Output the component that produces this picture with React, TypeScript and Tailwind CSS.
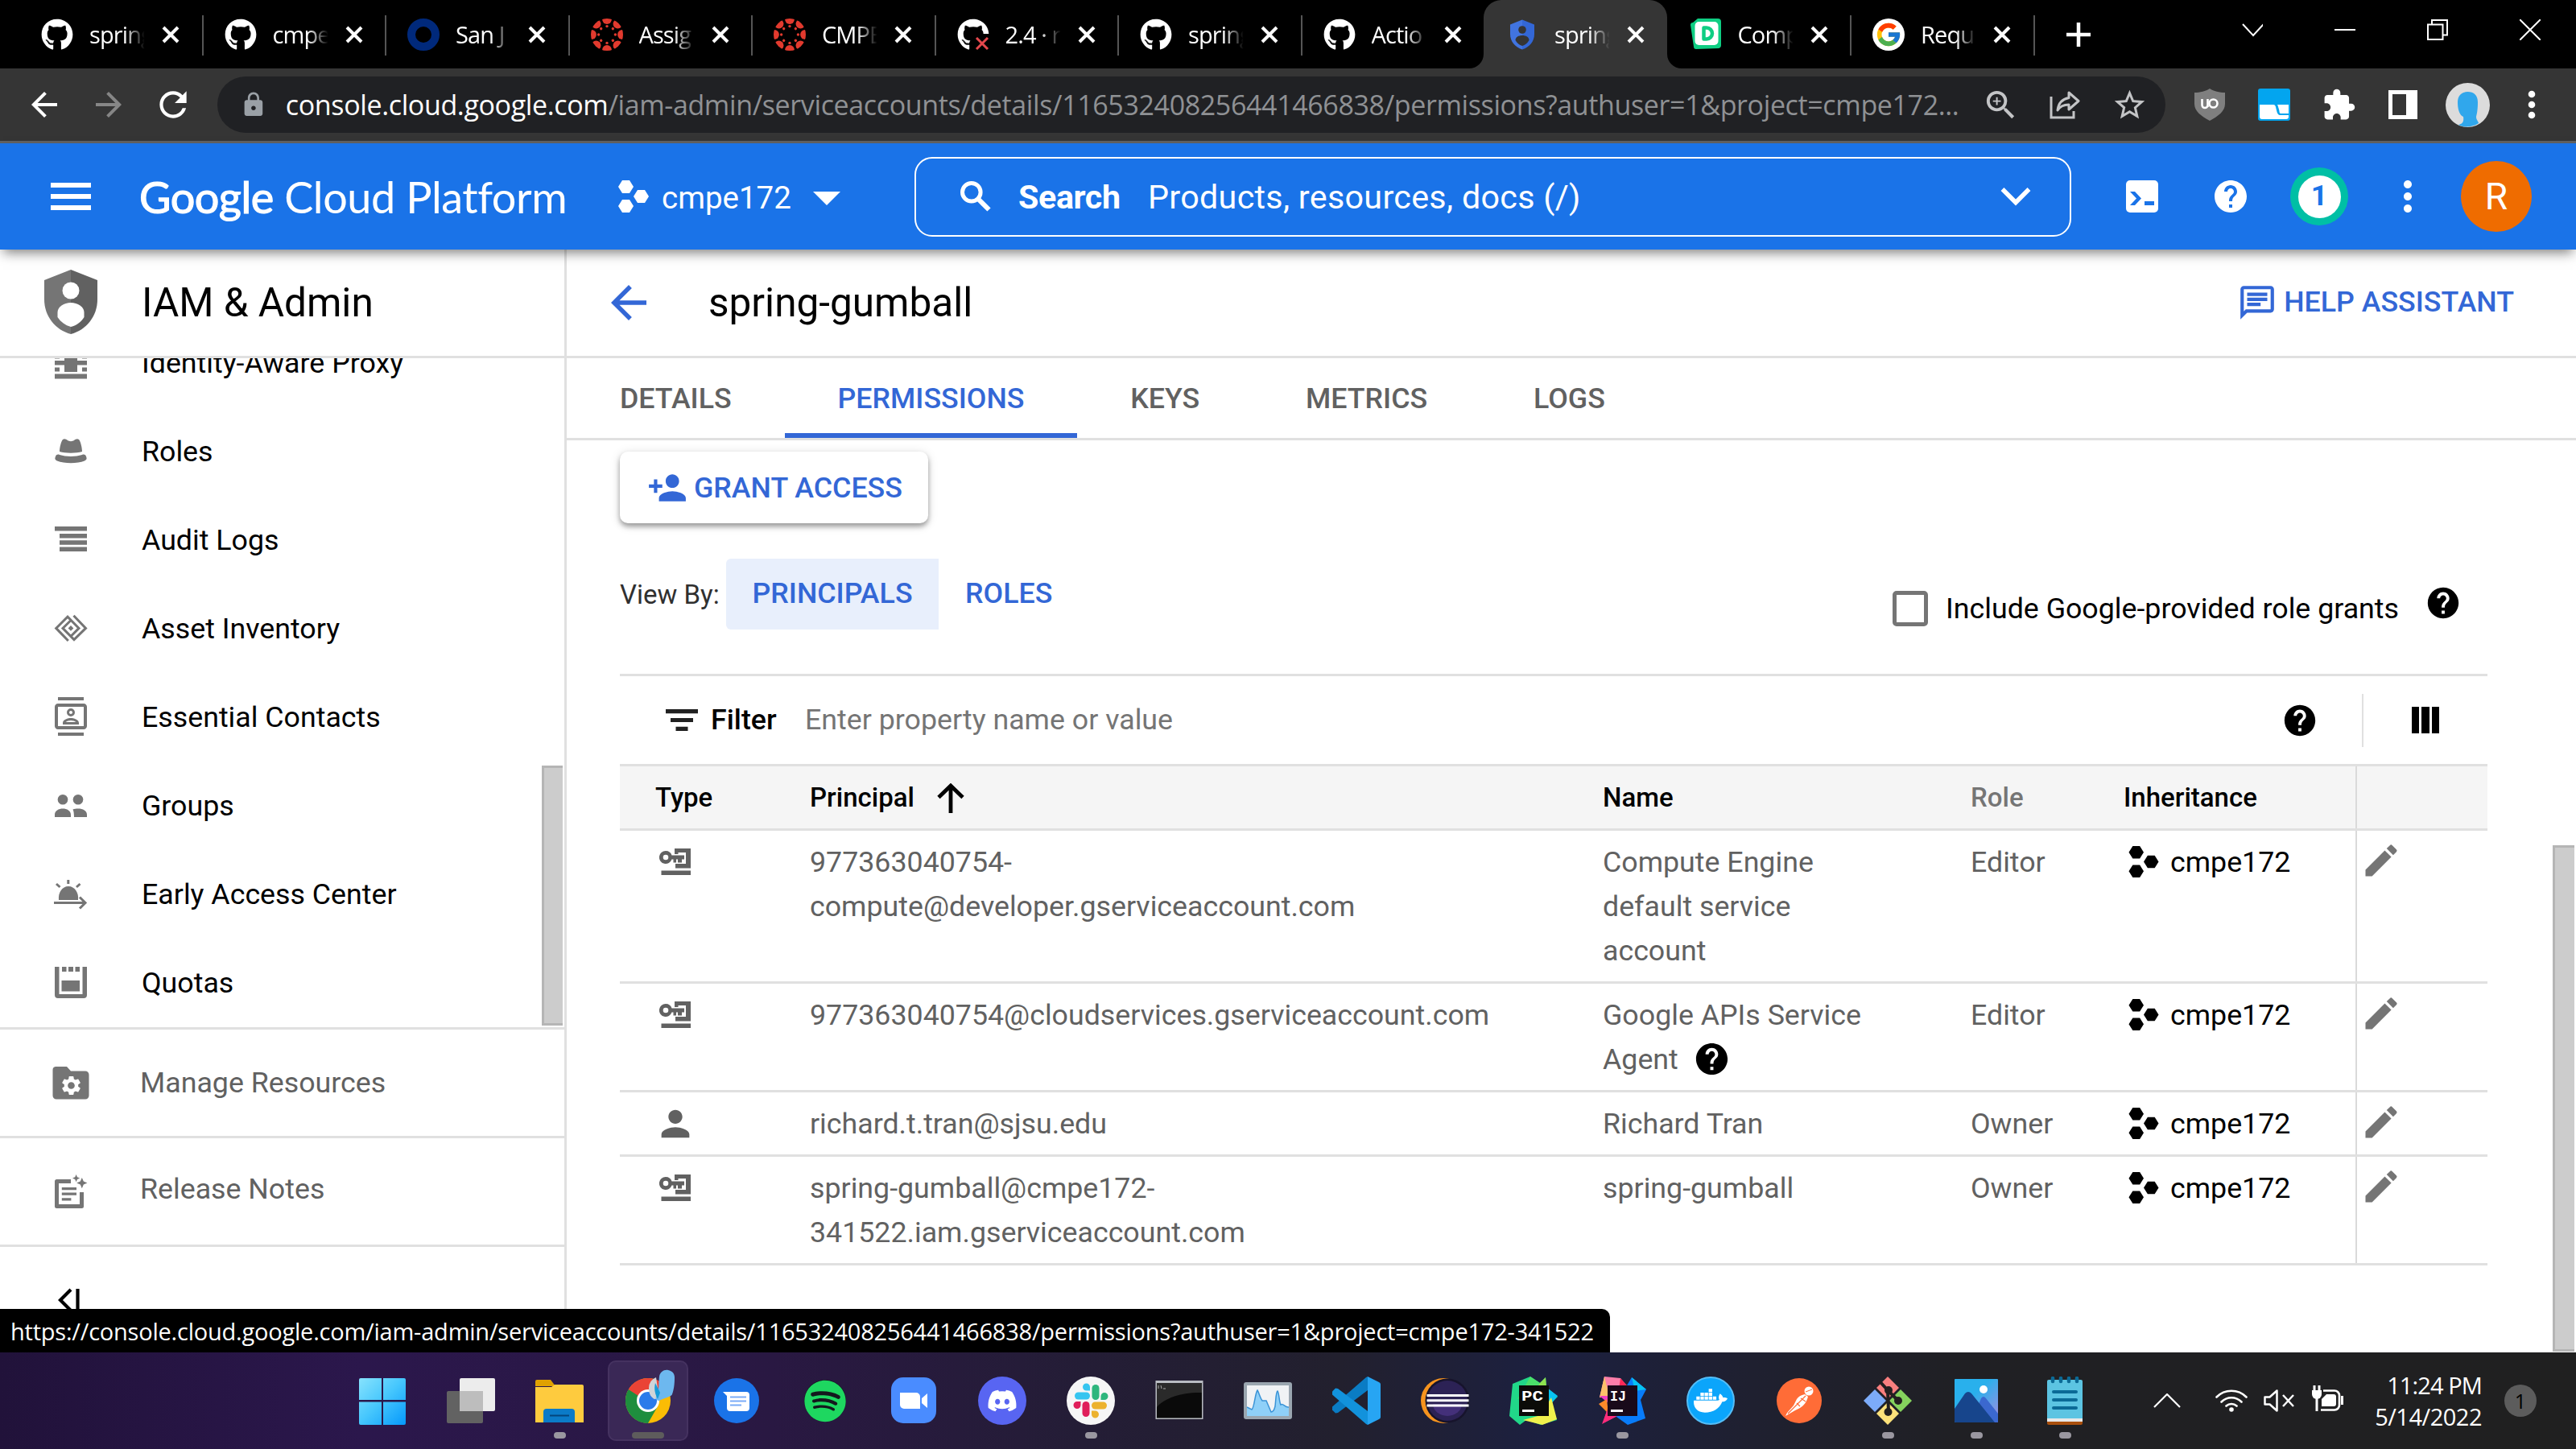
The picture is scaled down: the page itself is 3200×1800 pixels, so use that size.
import React from "react";
import {
  MdArrowBack, MdArrowForward, MdRefresh, MdLock, MdZoomIn, MdStarBorder, MdExtension, MdMoreVert,
  MdHelp, MdEdit, MdPerson, MdPersonAdd, MdOutlineChat, MdOutlineContacts, MdSettings,
} from "react-icons/md";
import { FaGithub, FaSpotify, FaDiscord, FaDocker } from "react-icons/fa";
import { FcGoogle } from "react-icons/fc";

type Kids = { children: React.ReactNode };

/* ---------- favicons ---------- */

const Github = () => <FaGithub className="size-10 text-white" />;

const GithubFail = () => (
  <div className="relative size-10">
    <FaGithub className="size-10 text-white" />
    <svg viewBox="0 0 40 40" className="absolute inset-0 size-10">
      <rect x="20" y="19" width="20" height="21" fill="#000" />
      <path d="M24 24l14 14M38 24L24 38" stroke="#e5484d" strokeWidth="3" />
    </svg>
  </div>
);

const Ring = () => (
  <svg viewBox="0 0 40 40" className="size-10">
    <circle cx="20" cy="20" r="15" fill="none" stroke="#00297b" strokeWidth="10" />
  </svg>
);

const Canvas = () => (
  <svg viewBox="0 0 40 40" className="size-10" fill="#e23a2e">
    <defs>
      <clipPath id="cv"><circle cx="20" cy="20" r="20" /></clipPath>
    </defs>
    {[0, 45, 90, 135, 180, 225, 270, 315].map((a) => (
      <g key={a} transform={`rotate(${a} 20 20)`} clipPath="url(#cv)">
        <circle cx="20" cy="1" r="5.9" />
        <circle cx="20" cy="9.6" r="1.7" />
      </g>
    ))}
  </svg>
);

const BlueShield = () => (
  <svg viewBox="0 0 40 40" className="size-10">
    <path d="M20 1.500l15 6v12c0 9-6 16-15 19z" fill="#3367d6" />
    <path d="M20 1.500l-15 6v12c0 9 6 16 15 19z" fill="#4174e0" />
    <circle cx="20" cy="14" r="4.800" fill="#353535" />
    <path d="M11.500 27c0-4 4-6 8.500-6s8.500 2 8.500 6c-2 3.500-5 6-8.500 7-3.500-1-6.500-3.500-8.500-7z" fill="#353535" />
  </svg>
);

const GreenD = () => (
  <svg viewBox="0 0 40 40" className="size-10">
    <path d="M1 8a3 3 0 013-3L10 0h25a4 4 0 014 4v29a4 4 0 01-3 4L8 38a3 3 0 01-3-3z" fill="#0fce83" />
    <rect x="6.500" y="4" width="29" height="29" rx="5" fill="#fff" />
    <path d="M17.500 11.500h3.500a7 7 0 010 14h-3.500z" fill="none" stroke="#0fce83" strokeWidth="4.500" strokeLinejoin="round" />
  </svg>
);

const GoogleG = () => (
  <div className="flex size-10 items-center justify-center rounded-full bg-white">
    <FcGoogle className="size-[34px]" />
  </div>
);

const tabs: { title: string; Icon: React.FC; active?: boolean; line?: boolean }[] = [
  { title: "spring", Icon: Github, line: true },
  { title: "cmpe", Icon: Github, line: true },
  { title: "San J", Icon: Ring, line: true },
  { title: "Assig", Icon: Canvas, line: true },
  { title: "CMPE", Icon: Canvas, line: true },
  { title: "2.4 · r", Icon: GithubFail, line: true },
  { title: "spring", Icon: Github, line: true },
  { title: "Actio", Icon: Github },
  { title: "spring", Icon: BlueShield, active: true },
  { title: "Comp", Icon: GreenD, line: true },
  { title: "Requ", Icon: GoogleG, line: true },
];

function Tab({ title, Icon, active, line }: (typeof tabs)[number]) {
  return (
    <div className={"relative flex h-[85px] w-[227.5px] shrink-0 items-center pl-[28px] " + (active ? "rounded-t-[22px] bg-[#353535]" : "")}>
      {active && (
        <>
          <svg viewBox="0 0 18 18" className="absolute -left-[18px] bottom-0 size-[18px]"><path d="M18 0v18H0A18 18 0 0018 0z" fill="#353535" /></svg>
          <svg viewBox="0 0 18 18" className="absolute -right-[18px] bottom-0 size-[18px]"><path d="M0 0v18h18A18 18 0 010 0z" fill="#353535" /></svg>
        </>
      )}
      <div className="size-10"><Icon /></div>
      <div className="ml-5 w-[70px] whitespace-nowrap text-[29px] tracking-[-0.9px] text-white [mask-image:linear-gradient(90deg,#000_62%,transparent_98%)]">{title}</div>
      <svg viewBox="0 0 22 22" className="ml-[20px] size-[22px]"><path d="M2 2l18 18M20 2L2 20" stroke="#fff" strokeWidth="4" /></svg>
      {line && <div className="absolute right-[-2px] top-[19px] h-[50px] w-[2px] bg-[#555]" />}
    </div>
  );
}

const WinBtn = ({ children }: Kids) => (
  <div className="flex h-[73px] w-[115px] items-center justify-center">
    <svg viewBox="0 0 26 26" className="size-[26px]" fill="none" stroke="#fff" strokeWidth="2">{children}</svg>
  </div>
);

function TabStrip() {
  return (
    <div className="flex h-[85px] shrink-0 bg-black pl-[23px]">
      {tabs.map((t, i) => <Tab key={i} {...t} />)}
      <div className="flex h-[85px] w-[113px] items-center justify-center">
        <svg viewBox="0 0 30 30" className="size-[30px]"><path d="M15 0v30M0 15h30" stroke="#fff" strokeWidth="4.500" /></svg>
      </div>
      <div className="ml-auto flex">
        <WinBtn><path d="M1 6l13 14L27 6" /></WinBtn>
        <WinBtn><path d="M0 13h26" /></WinBtn>
        <WinBtn><path d="M1 6.500h18.500V25H1zM6 6V1h19v18.500h-5" /></WinBtn>
        <WinBtn><path d="M0 0l26 26M26 0L0 26" /></WinBtn>
      </div>
    </div>
  );
}

const Slot = ({ children }: Kids) => <div className="flex w-20 shrink-0 items-center justify-center">{children}</div>;

function Toolbar() {
  return (
    <div className="flex h-[93px] shrink-0 items-center border-b-[3px] border-[#616161] bg-[#353535] pl-[15px]">
      <Slot><MdArrowBack className="size-12 text-white" /></Slot>
      <Slot><MdArrowForward className="size-12 text-[#868686]" /></Slot>
      <Slot><MdRefresh className="size-[50px] text-white" /></Slot>
      <div className="ml-[15px] flex h-[70px] w-[2420px] items-center rounded-full bg-[#202124] pl-[28px] pr-[5px]">
        <MdLock className="size-[34px] text-[#9aa0a6]" />
        <div className="ml-[23px] w-[2100px] whitespace-nowrap text-[34px] leading-[70px] tracking-[-0.37px] text-[#8f9194]">
          <span className="text-white">console.cloud.google.com</span>/iam-admin/serviceaccounts/details/116532408256441466838/permissions?authuser=1&amp;project=cmpe172...
        </div>
        <Slot><MdZoomIn className="size-[47px] text-[#c3c4c6]" /></Slot>
        <Slot>
          <svg viewBox="0 0 38 36" className="h-[36px] w-[38px]" fill="none" stroke="#c3c4c6" strokeWidth="3">
            <path d="M2 8v26h28v-8" />
            <path d="M24 3l12 10.500L24 24v-6c-7 0-11 2-14 7 1-9 6-14 14-15.500z" strokeLinejoin="round" />
          </svg>
        </Slot>
        <Slot><MdStarBorder className="size-[45px] text-[#c3c4c6]" /></Slot>
      </div>
      <div className="ml-[15px] flex">
        <Slot>
          <svg viewBox="0 0 38 40" className="h-10 w-[38px]">
            <path d="M19 0c5 3.500 12 5 19 5v14c0 9-8 15-19 21C8 34 0 28 0 19V5c7 0 14-1.500 19-5z" fill="#7f7f7f" />
            <path d="M9.500 13v7.500a3.500 3.500 0 007 0V13m0 10v-4" fill="none" stroke="#fff" strokeWidth="2.600" />
            <circle cx="23.500" cy="18.500" r="5" fill="none" stroke="#fff" strokeWidth="2.600" />
          </svg>
        </Slot>
        <Slot>
          <svg viewBox="0 0 40 40" className="size-10">
            <rect width="40" height="40" rx="3" fill="#03a5ef" />
            <path d="M2 20h17c3 0 3 3 4 7s2 6 5 6h10v2c0 2-1 3-3 3H5c-2 0-3-1-3-3zM24 20h14v11h-9c-3 0-2-2-3-5s-1-4-2-6z" fill="#fff" />
          </svg>
        </Slot>
        <Slot><MdExtension className="size-[43px] text-white" /></Slot>
        <Slot>
          <svg viewBox="0 0 36 36" className="size-9"><path d="M0 0h36v36H0zM5 5v26h17V5z" fill="#fff" fillRule="evenodd" /></svg>
        </Slot>
        <Slot>
          <svg viewBox="0 0 55 55" className="size-[55px]">
            <circle cx="27.500" cy="27.500" r="27.500" fill="#dcdcdc" />
            <path d="M15 24c0-8 5-13 12.500-13S40 15 40 24c0 9-1 14-2 18 0 4 3 6 3 8-7 5-19 6-25 2 5-1 7-4 6-10-5-2-7-10-7-18z" fill="#30a7ec" />
          </svg>
        </Slot>
        <Slot>
          <svg viewBox="0 0 10 36" className="h-9 w-[10px]" fill="#fff"><circle cx="5" cy="5" r="4.300" /><circle cx="5" cy="18" r="4.300" /><circle cx="5" cy="31" r="4.300" /></svg>
        </Slot>
      </div>
    </div>
  );
}

const Hexes = ({ className }: { className: string }) => (
  <svg viewBox="0 0 38 40" className={className} fill="currentColor">
    <path d="M5 0h9l5 8-5 8H5L0 8zM24 12h9l5 8-5 8h-9l-5-8zM5 24h9l5 8-5 8H5l-5-8z" />
  </svg>
);

const HeadSlot = ({ children }: Kids) => <div className="flex w-[110px] shrink-0 items-center justify-center">{children}</div>;

function CloudHeader() {
  return (
    <div className="relative z-10 flex h-[132px] shrink-0 items-center bg-[#1a73e8] pl-[63px] text-white shadow-[0_8px_14px_-4px_rgba(0,0,0,0.5)]">
      <svg viewBox="0 0 50 34" className="h-[34px] w-[50px]"><path d="M0 3h50M0 17h50M0 31h50" stroke="#fff" strokeWidth="6" /></svg>
      <div className="ml-[60px] w-[595px] whitespace-nowrap pt-[1px] font-[Lato] text-[54px] leading-[66px] tracking-[-0.45px]">
        <span className="[-webkit-text-stroke:1.2px_#fff]">Google</span> Cloud Platform
      </div>
      <Hexes className="h-10 w-[38px]" />
      <div className="ml-[16px] w-[188px] pt-[3px] text-[38.5px]">cmpe172</div>
      <svg viewBox="0 0 34 17" className="mt-[5px] h-[17px] w-[34px]"><path d="M0 0h34L17 17z" fill="#fff" /></svg>
      <div className="ml-[92px] flex h-[99px] w-[1437px] items-center rounded-[22px] border-2 border-white pl-[55px] pr-[48px]">
        <svg viewBox="0 0 38 38" className="size-[38px]" fill="none" stroke="#fff"><circle cx="13.800" cy="13.800" r="11.300" strokeWidth="5" /><path d="M22 22l13.500 13.500" strokeWidth="6" /></svg>
        <div className="ml-[34px] w-[161px] pt-[3px] text-[41.25px] font-bold tracking-[-0.4px]">Search</div>
        <div className="flex-1 pt-[3px] text-[41.25px] tracking-[0.3px]">Products, resources, docs (/)</div>
        <svg viewBox="0 0 38 24" className="h-6 w-[38px]"><path d="M2.500 3L19 19.500 35.500 3" fill="none" stroke="#fff" strokeWidth="5.500" /></svg>
      </div>
      <div className="ml-[33px] flex items-center">
        <HeadSlot>
          <svg viewBox="0 0 40 40" className="size-10">
            <rect width="40" height="40" rx="5" fill="#fff" />
            <path d="M5 14h6l8 8.500-8 8.500H5l8-8.500z" fill="#1a73e8" />
            <path d="M23 26h12v5H23z" fill="#1a73e8" />
          </svg>
        </HeadSlot>
        <HeadSlot><MdHelp className="size-12" /></HeadSlot>
        <HeadSlot>
          <div className="flex size-[72px] items-center justify-center rounded-full bg-[#00bfa5]">
            <div className="flex size-[53px] items-center justify-center rounded-full bg-white text-[35.75px] font-bold leading-none text-[#1a73e8]">1</div>
          </div>
        </HeadSlot>
        <HeadSlot><MdMoreVert className="size-[60px]" /></HeadSlot>
        <HeadSlot>
          <div className="flex size-[88px] items-center justify-center rounded-full bg-[#ef6c00] text-[46px]">R</div>
        </HeadSlot>
      </div>
    </div>
  );
}

/* ---------- sidebar ---------- */

const Glyph = ({ children }: Kids) => <svg viewBox="0 0 48 48" className="size-12" fill="#757575">{children}</svg>;

const navItems: { label: string; icon: React.ReactNode }[] = [
  { label: "Identity-Aware Proxy", icon: <Glyph><path d="M4 38.500h40v6H4zM4 30.500h6v5H4zM38 30.500h6v5h-6zM16 12h16v24H16zM4 22h40v5.500H4zM4 14h6v5.500H4zM38 14h6v5.500h-6z" /></Glyph> },
  { label: "Roles", icon: <Glyph><path d="M14 10c2-1.500 4-.5 6 1s6 1.500 8 0 4-2.500 6-1c2 2 4 10 4 15-7 2.200-21 2.200-28 0 0-5 2-13 4-15z" /><path d="M5 31c1-2.500 3-3 5-2 8 2.500 20 2.500 28 0 2-1 4-.5 5 2 1 2.500 1 4-2 5.500-9 3.500-25 3.500-34 0-3-1.500-3-3-2-5.500z" /></Glyph> },
  { label: "Audit Logs", icon: <Glyph><path d="M4 8h40v5.500H4zM10 17h34v5.500H10zM10 25.300h34v5.500H10zM10 33.500h34V39H10z" /></Glyph> },
  { label: "Asset Inventory", icon: <Glyph><g fill="none" stroke="#757575" strokeWidth="3"><path d="M20.800 40L5.700 24.400 20 10.200l14 14.200-9.600 9.600" /><path d="M27.500 8.800l15 15.600L28 38.600 14 24.400l9.600-9.400" /></g><path d="M24 21l3.400 3.400-3.400 3.400-3.400-3.400z" /></Glyph> },
  { label: "Essential Contacts", icon: <MdOutlineContacts className="size-[48px] text-[#757575]" /> },
  { label: "Groups", icon: <Glyph><circle cx="14" cy="17.300" r="6.300" /><circle cx="33" cy="17.300" r="6.300" /><path d="M4 39v-3c0-5 5-7.500 10-7.500S24 31 24 36v3zM28 39c-.2-4-.2-7-1.500-9.500 2-1 4-1 6.500-1 6 0 11 2.500 11 7.500v3z" /></Glyph> },
  { label: "Early Access Center", icon: <Glyph><path d="M9 32c-1-9 4-17 12-17s13 8 12 17z" /><path d="M3 35.500h39M35 28.500l7 7-7 7M20.800 7v5M6 12l4.500 4M35.500 12L31 16" fill="none" stroke="#757575" strokeWidth="3" /></Glyph> },
  { label: "Quotas", icon: <Glyph><path d="M4 5h5.500v34h29V5H44v35a4 4 0 01-4 4H8a4 4 0 01-4-4zM13 5h5.500v6H13zM21 5h6v6h-6zM29.500 5H35v6h-5.500zM12.500 22H35v13.500H12.500z" /></Glyph> },
];

function Sidebar() {
  return (
    <aside className="flex w-[704px] shrink-0 flex-col border-r-[3px] border-[#e0e0e0] bg-white">
      <div className="flex h-[135px] shrink-0 items-center border-b-[3px] border-[#e0e0e0] pl-[55px]">
        <svg viewBox="0 0 66 80" className="mb-[2px] h-20 w-[66px]">
          <path d="M33 0L0 13v24c0 21 14 38 33 43z" fill="#757575" />
          <path d="M33 0l33 13v24c0 21-14 38-33 43z" fill="#616161" />
          <circle cx="33" cy="26" r="10.500" fill="#fff" />
          <path d="M16.500 53c0-7 8-12 16.500-12s16.500 5 16.500 12v6c-4 6-9 10-16.500 12-7-2-12.500-6-16.500-12z" fill="#fff" />
        </svg>
        <h1 className="ml-[55px] text-[49.5px] text-black">IAM &amp; Admin</h1>
      </div>
      <div className="flex h-[831px] shrink-0 overflow-hidden">
        <nav className="-mt-[50px] flex flex-1 flex-col">
          {navItems.map((n) => (
            <div key={n.label} className="flex h-[110px] shrink-0 items-center pl-16">
              {n.icon}
              <span className="ml-[64px] pt-[3px] text-[35.75px] text-black">{n.label}</span>
            </div>
          ))}
        </nav>
        <div className="mr-[2px] mt-[506px] h-[323px] w-[26px] border-y-[3px] border-l-[3px] border-[#b5b5b5] bg-[#ccc]" />
      </div>
      <div className="flex h-[138px] shrink-0 items-center border-y-[3px] border-[#e0e0e0] pl-16">
        <div className="relative flex size-12 items-center justify-center">
          <svg viewBox="0 0 48 48" className="absolute inset-0 size-12"><path d="M5 4h14l5 5.500h18a4.500 4.500 0 014.500 4.500v26a4.500 4.500 0 01-4.500 4.500H6A4.500 4.500 0 011.500 40V8A4 4 0 015 4z" fill="#757575" /></svg>
          <MdSettings className="relative top-[3px] size-[29px] text-white" />
        </div>
        <span className="ml-[62px] pt-[1px] text-[35.75px] text-[#616161]">Manage Resources</span>
      </div>
      <div className="flex h-[135px] shrink-0 items-center border-b-[3px] border-[#e0e0e0] pl-16">
        <Glyph>
          <path d="M24 11.500H6.500v31H37.500V25" fill="none" stroke="#757575" strokeWidth="5" strokeLinejoin="round" />
          <path d="M12.800 19H31v3.300H12.800zM12.800 25.500H31v3.300H12.800zM12.800 32.300h11.600v3.300H12.800z" />
          <path d="M37.800 7l2 4.600 4.600 2-4.600 2-2 4.600-2-4.600-4.600-2 4.600-2zM30.600 3l1.400 3.200 3.200 1.400-3.200 1.400-1.400 3.200-1.400-3.200L26 7.600l3.200-1.400z" />
        </Glyph>
        <span className="mb-[5px] ml-[62px] text-[35.75px] text-[#616161]">Release Notes</span>
      </div>
      <div className="pl-[72px] pt-[50px]">
        <svg viewBox="0 0 28 32" className="h-8 w-7"><path d="M16 3L3 16l13 13M24.500 2v28" fill="none" stroke="#000" strokeWidth="4.200" /></svg>
      </div>
    </aside>
  );
}

/* ---------- main panel ---------- */

const KeyIcon = () => (
  <svg viewBox="0 0 39 33" className="h-[33px] w-[39px]" fill="#616161">
    <path d="M2.500 27.500H39V33H2.500zM19 0h20v24.500H20V19h13V5h-9.500v2H19z" />
    <path d="M8 3a8 8 0 107.500 10.500h2v4h3.500v-4h2v4h5v-4h3V8.500H15.500A8 8 0 008 3zm0 4.700a3.300 3.300 0 110 6.600 3.300 3.300 0 010-6.600z" fillRule="evenodd" />
  </svg>
);

type Row = { kind: "key" | "person"; principal: string[]; name: string[]; help?: boolean; role: string };
const rows: Row[] = [
  { kind: "key", principal: ["977363040754-", "compute@developer.gserviceaccount.com"], name: ["Compute Engine", "default service", "account"], role: "Editor" },
  { kind: "key", principal: ["977363040754@cloudservices.gserviceaccount.com"], name: ["Google APIs Service", "Agent"], help: true, role: "Editor" },
  { kind: "person", principal: ["richard.t.tran@sjsu.edu"], name: ["Richard Tran"], role: "Owner" },
  { kind: "key", principal: ["spring-gumball@cmpe172-", "341522.iam.gserviceaccount.com"], name: ["spring-gumball"], role: "Owner" },
];

function DataTable() {
  return (
    <div className="w-[2320px] border-t-[3px] border-[#e0e0e0] text-[35.75px]">
      <div className="flex h-[109px] items-center pl-[57px]">
        <svg viewBox="0 0 40 27" className="h-[27px] w-10"><path d="M0 0h40v5.200H0zM6 10.900h28v5.200H6zM12.500 21.800h15V27h-15z" fill="#212121" /></svg>
        <span className="ml-[16px] w-[117px] font-medium text-black">Filter</span>
        <span className="flex-1 text-[#757575]">Enter property name or value</span>
        <MdHelp className="size-[46px] text-black" />
        <div className="ml-[54px] h-[66px] w-[2px] bg-[#e0e0e0]" />
        <svg viewBox="0 0 34 33" className="ml-[60px] mr-[60px] h-[33px] w-[34px]"><path d="M0 0h9v33H0zM12 0h10v33H12zM25 0h9v33h-9z" /></svg>
      </div>
      <div className="grid h-[83px] grid-cols-[236px_985px_457px_190px_288px_164px] items-center border-y-[3px] border-[#e0e0e0] bg-[#f5f5f5] text-[33px] font-medium text-black">
        <div className="pl-[44px]">Type</div>
        <div className="flex items-center">
          Principal
          <svg viewBox="0 0 34 37" className="mt-[1px] ml-[28px] h-[37px] w-[34px]"><path d="M2 17.500L17 3l15 14.500M17 4v33" fill="none" stroke="#000" strokeWidth="4.800" /></svg>
        </div>
        <div>Name</div>
        <div className="text-[#757575]">Role</div>
        <div>Inheritance</div>
        <div className="h-full border-l-2 border-[#dadada]" />
      </div>
      {rows.map((r) => (
        <div key={r.principal[0]} className="grid grid-cols-[236px_985px_457px_190px_288px_164px] border-b-[3px] border-[#e0e0e0] leading-[55px] text-[#616161]">
          <div className={"pt-[11px] " + (r.kind === "key" ? "pl-[49px]" : "pl-[43px]")}>
            <div className="flex h-[55px] items-center">
              {r.kind === "key" ? <KeyIcon /> : <MdPerson className="size-[52px]" />}
            </div>
          </div>
          <div className="pb-[10px] pt-[12px]">{r.principal.map((l) => <div key={l}>{l}</div>)}</div>
          <div className="pb-[10px] pt-[12px]">
            {r.name.map((l, i) => (
              <div key={l} className="flex items-center">
                {l}
                {r.help && i === 1 && <MdHelp className="mb-[2px] ml-[18px] size-[47px] text-black" />}
              </div>
            ))}
          </div>
          <div className="pt-[12px]">{r.role}</div>
          <div className="pt-[11px]">
            <div className="flex h-[55px] items-center pl-[6px] text-black"><Hexes className="h-[39px] w-[38px]" /><span className="ml-[14px] pt-[2px]">cmpe172</span></div>
          </div>
          <div className="border-l-2 border-[#dadada] pl-[4px] pt-[9px]">
            <div className="flex h-[55px] items-center"><MdEdit className="size-[52px] text-[#757575]" /></div>
          </div>
        </div>
      ))}
    </div>
  );
}

function Main() {
  return (
    <main className="flex flex-1 flex-col bg-white">
      <div className="flex h-[135px] shrink-0 items-center border-b-[3px] border-[#e0e0e0] pl-[44px] pr-[77px]">
        <MdArrowBack className="size-[66px] text-[#3367d6]" />
        <h2 className="ml-[66px] flex-1 text-[49.5px] text-black">spring-gumball</h2>
        <div className="flex items-center text-[35.75px] font-medium text-[#3367d6]"><MdOutlineChat className="mr-[8px] size-[50px]" />HELP ASSISTANT</div>
      </div>
      <div className="flex h-[102px] shrink-0 items-stretch border-b-[3px] border-[#e0e0e0] text-[35.75px] font-medium text-[#616161]">
        {["DETAILS", "PERMISSIONS", "KEYS", "METRICS", "LOGS"].map((t) => (
          <div key={t} className={"flex items-center border-b-[6px] px-[65.9px] pt-[8px] " + (t === "PERMISSIONS" ? "border-[#3367d6] text-[#3367d6]" : "border-transparent")}>{t}</div>
        ))}
      </div>
      <div className="flex flex-1 pl-[66px]">
        <div className="w-[2320px] pt-[14px]">
          <div className="flex h-[89px] w-[383px] items-center rounded-[10px] bg-white pl-[34px] text-[35.75px] font-medium text-[#3367d6] shadow-[0_4px_6px_rgba(0,0,0,0.35),0_2px_14px_rgba(0,0,0,0.12)]">
            <MdPersonAdd className="mr-[8px] size-[50px]" />
            <span className="whitespace-nowrap pt-[2px]">GRANT ACCESS</span>
          </div>
          <div className="flex h-[187px] text-[35.75px]">
            <div className="flex h-[175px] flex-1 items-center">
              <span className="w-[132px] whitespace-nowrap pt-[2px] text-[33px] text-[#303030]">View By:</span>
              <div className="flex h-[88px] w-[264px] items-center justify-center rounded-l-[6px] bg-[#e8effc] pt-[1px] font-medium text-[#3367d6]">PRINCIPALS</div>
              <span className="ml-[33px] pt-[1px] font-medium text-[#3367d6]">ROLES</span>
            </div>
            <div className="mt-[84px] flex h-[44px] items-center pr-[32px] text-black">
              <div className="size-[44px] rounded-[5px] border-[5px] border-[#757575]" />
              <span className="ml-[22px] pt-[1px]">Include Google-provided role grants</span>
              <MdHelp className="mb-[14px] ml-[32px] size-[46px] text-black" />
            </div>
          </div>
          <DataTable />
        </div>
        <div className="ml-auto mr-[2px] mt-[503px] h-[629px] w-[27px] border-y-[3px] border-l-[3px] border-[#b5b5b5] bg-[#ccc]" />
      </div>
    </main>
  );
}

/* ---------- taskbar ---------- */

const Ico = ({ children }: Kids) => <svg viewBox="0 0 60 60" className="size-[60px]">{children}</svg>;

const WindowsLogo = () => (
  <Ico>
    <defs><linearGradient id="wn" gradientUnits="userSpaceOnUse" x1="0" y1="0" x2="60" y2="60"><stop offset="0" stopColor="#8be4fd" /><stop offset=".5" stopColor="#45c6fd" /><stop offset="1" stopColor="#0498fb" /></linearGradient></defs>
    <path d="M3 2h26v27H1V4a2 2 0 012-2zM31 2h26a2 2 0 012 2v25H31zM1 31.500h28V60H3a2 2 0 01-2-2zM31 31.500h28V58a2 2 0 01-2 2H31z" fill="url(#wn)" />
  </Ico>
);
const TaskView = () => (
  <Ico>
    <rect x="16" y="2" width="44" height="41" rx="2" fill="#ececec" />
    <rect y="18" width="45" height="40" rx="2" fill="#626262" />
    <path d="M16 18h29v25H16z" fill="#bdbdbd" />
  </Ico>
);
const Explorer = () => (
  <Ico>
    <path d="M0 6a2 2 0 012-2h17l6 8H0z" fill="#e0a100" />
    <path d="M0 13h20l4-3h34a2 2 0 012 2v45H0z" fill="#fecb3e" />
    <path d="M10 57V44a4 4 0 014-4h31a4 4 0 014 4v13z" fill="#0b7bc8" />
    <path d="M18 48.500h24" stroke="#04467c" strokeWidth="2" />
  </Ico>
);
const Chrome = () => (
  <svg viewBox="0 0 60 60" className="size-[60px] overflow-visible">
    <circle cx="30" cy="30" r="28" fill="#fbbc05" />
    <path d="M5.700 16A28 28 0 0030 58l12-21-12-7z" fill="#1e8e3e" />
    <path d="M5.700 16l12 21 12-7V16z" fill="#1e8e3e" />
    <path d="M5.700 16A28 28 0 0154.300 16H30L18 24z" fill="#ea4335" />
    <circle cx="30" cy="30" r="14" fill="#fff" />
    <circle cx="30" cy="30" r="11" fill="#2b7bea" />
    <path d="M40 1a14 14 0 00-9 13c0 8 3 12 7 14l6-1z" fill="#cfd4d8" />
    <path d="M44 0c1-6 6-9 11-8s8 4 8 9c0 9-1 15-3 21 0 3-12 5-16 8-5 0-5-5-3-8 3-6 2-14 3-22z" fill="#6db8ef" />
    <path d="M39 8c-2 8 0 14 3 20l3-8z" fill="#159bd9" />
  </svg>
);
const Messages = () => (
  <Ico>
    <circle cx="30" cy="30" r="28" fill="#1a73e8" />
    <path d="M13 19h29a4 4 0 014 4v16a4 4 0 01-4 4H22a4 4 0 01-4-4V24z" fill="#fff" />
    <path d="M22 25.500h20M22 30.500h20M22 35.500h14" stroke="#7aabf7" strokeWidth="2.200" />
  </Ico>
);
const Spotify = () => (
  <div className="flex size-[60px] items-center justify-center">
    <div className="flex size-[52px] items-center justify-center rounded-full bg-[#14181d]"><FaSpotify className="size-[53px] text-[#1ed760]" /></div>
  </div>
);
const Zoom = () => (
  <Ico>
    <rect x="2" y="1" width="56" height="57" rx="15" fill="#4a8cff" />
    <path d="M13 20h20a5 5 0 015 5v15H18a5 5 0 01-5-5zM40 27l7-6v18l-7-6z" fill="#fff" />
  </Ico>
);
const Discord = () => (
  <div className="flex size-[60px] items-center justify-center rounded-full bg-[#5865f2]"><FaDiscord className="size-[38px] text-white" /></div>
);
const Slack = () => (
  <Ico>
    <circle cx="30" cy="30" r="30" fill="#f6f6f6" />
    <g transform="translate(30 30)">
      {[["#36c5f0", 0], ["#2eb67d", 90], ["#ecb22e", 180], ["#e01e5a", 270]].map(([c, a]) => (
        <g key={a} fill={c as string} transform={`rotate(${a})`}>
          <rect x="-20" y="-10.500" width="19" height="9" rx="4.500" />
          <path d="M-1-12.500h-4.500A4.500 4.500 0 11-1-17z" />
        </g>
      ))}
    </g>
  </Ico>
);
const Cmd = () => (
  <Ico>
    <rect x="0.500" y="5" width="59" height="48" fill="#b9bcc2" />
    <rect x="2" y="8" width="56" height="43.500" fill="#0a0a0a" />
    <path d="M2 8h56v12C35 19 12 26 2 38z" fill="#2a2a2a" />
    <path d="M4 11v4M7 11l1 4M10 15h3" stroke="#aaa" strokeWidth="1" />
  </Ico>
);
const TaskMgr = () => (
  <Ico>
    <rect y="7" width="60" height="46" rx="3" fill="#9aa6b0" />
    <rect x="4" y="11" width="52" height="37" fill="#f0f2f5" />
    <path d="M4 38l6 3c3-1 4-20 7-24 2 3 3 9 6 13h5l6 14c3 0 4-3 5-7 1-9 1-18 3-19 2 2 2 14 4 17 3-3 5 4 10 3v11H4z" fill="#8fd0f8" />
    <path d="M4 38l6 3c3-1 4-20 7-24 2 3 3 9 6 13h5l6 14c3 0 4-3 5-7 1-9 1-18 3-19 2 2 2 14 4 17 3-3 5 4 10 3" fill="none" stroke="#3b93d6" strokeWidth="1.500" />
  </Ico>
);
const VsCode = () => (
  <Ico>
    <path d="M44 0v17L7 45l-3 .500-4-4v-4L42 1z" fill="#0a7cc4" />
    <path d="M44 60V43L7 15l-3-.5-4 4v4L42 59z" fill="#1292dc" />
    <path d="M44 0l14 7a3 3 0 012 3v40a3 3 0 01-2 3l-14 7z" fill="#27a5f3" />
  </Ico>
);
const Eclipse = () => (
  <Ico>
    <circle cx="28" cy="30" r="28" fill="#f7941e" />
    <circle cx="33" cy="30" r="27.500" fill="#17142c" />
    <circle cx="33" cy="30" r="25" fill="#2c2255" />
    <path d="M15 34a18 15 0 0036 0z" fill="#44307a" />
    <path d="M7.500 23.500h52M7.500 29.800h52M7.500 36h52" stroke="#fff" strokeWidth="3" />
  </Ico>
);
const PyCharm = () => (
  <Ico>
    <path d="M4 9L26 0l12 8 7-7 1 12 14 12-8 8 7 21-20 6-18-6-8 6L0 49z" fill="#21d789" />
    <path d="M26 0l12 8-10 12-18 8z" fill="#4be06a" />
    <path d="M45 1l1 12-16 6 8-11z" fill="#8fe34f" />
    <path d="M48 15l12 9-10 12z" fill="#07c3f2" />
    <path d="M52 26l7 27-18 7-24-6 22-6z" fill="#f0f04c" />
    <rect x="12" y="11" width="37" height="38" fill="#0b0b08" />
    <text x="15" y="30" fontSize="19" fontWeight="700" fontFamily="Liberation Mono" fill="#fff" textLength="27" lengthAdjust="spacingAndGlyphs">PC</text>
    <rect x="16" y="41" width="15" height="3" fill="#fff" />
  </Ico>
);
const IntelliJ = () => (
  <Ico>
    <path d="M8 0l20 2 10 12-12 10-24 2z" fill="#fc7eaa" />
    <path d="M8 0l-6 26 12-2z" fill="#fdc16a" />
    <path d="M28 2l14 16-16-2z" fill="#fe2857" />
    <path d="M42 1l18 15-7 13 6 23-22 8-14-10 10-34z" fill="#087cfa" />
    <path d="M42 1l18 15-14 2z" fill="#07c3f2" />
    <path d="M2 24l12 10-8 24 20-10V24z" fill="#f23ec4" />
    <path d="M1 34l10-6 2 18z" fill="#fd8a2a" />
    <path d="M5 59l9-24 8 15z" fill="#fe2c7a" />
    <rect x="12" y="11" width="37" height="38" fill="#190a1a" />
    <text x="15" y="30" fontSize="19" fontWeight="700" fontFamily="Liberation Mono" fill="#fff" textLength="20" lengthAdjust="spacingAndGlyphs">IJ</text>
    <rect x="16" y="41" width="15" height="3" fill="#fff" />
  </Ico>
);
const Docker = () => (
  <div className="flex size-[60px] items-center justify-center rounded-full border-2 border-[#55bdf6] bg-[#0ba5fb]"><FaDocker className="size-[42px] text-white" /></div>
);
const Postman = () => (
  <Ico>
    <circle cx="30" cy="30" r="28" fill="#ff6c37" />
    <circle cx="42" cy="18" r="5.500" fill="#fff" />
    <path d="M37 22l4 3c-2 7-5 11-10 14l-6 3-12 7 2-4 8-9 4-8c2-3 5-5 10-6z" fill="#fff" />
    <path d="M38 24L16 46M32 27l6 4M27 33l4 4" stroke="#ff6c37" strokeWidth="1.200" />
    <path d="M38 19l8-3" stroke="#ff6c37" strokeWidth="1" />
  </Ico>
);
const Git = () => (
  <Ico>
    <path d="M30 0l14 14-14 14-14-14z" fill="#f97f7f" />
    <path d="M14 16l14 14-14 14L0 30z" fill="#7cabf9" />
    <path d="M46 16l14 14-14 14-14-14z" fill="#85d35d" />
    <path d="M30 32l14 14-14 14-14-14z" fill="#fde17a" />
    <path d="M20 6l10 11 1 27M31 18l11 11" stroke="#231f20" strokeWidth="4" fill="none" />
    <circle cx="31" cy="17" r="5" fill="#231f20" /><circle cx="43" cy="30" r="5" fill="#231f20" /><circle cx="30.500" cy="44" r="5" fill="#231f20" />
  </Ico>
);
const Photos = () => (
  <Ico>
    <defs><linearGradient id="ph" x1="0" y1="0" x2="1" y2="1"><stop offset=".4" stopColor="#29b0ec" /><stop offset="1" stopColor="#a58be0" /></linearGradient></defs>
    <rect x="3" y="3" width="54" height="54" rx="1" fill="url(#ph)" />
    <path d="M24 57l12-30q3-4 6 0l15 19v10a1 1 0 01-1 1z" fill="#3b68cf" />
    <path d="M3 40l13-19q4-4 8 0l29 36H4a1 1 0 01-1-1z" fill="#17458c" />
    <circle cx="39" cy="16" r="5" fill="#fff" />
  </Ico>
);
const Notepad = () => (
  <Ico>
    <path d="M8 55h44v3a2 2 0 01-2 2H10a2 2 0 01-2-2z" fill="#a9500e" />
    <path d="M8 52h44v4H8z" fill="#e8e8e8" />
    <path d="M10 4h40a2 2 0 012 2v46H8V6a2 2 0 012-2z" fill="#5cc4e2" />
    <path d="M15 2v4M25 2v4M35 2v4M45 2v4" stroke="#0b6a96" strokeWidth="4.500" strokeLinecap="round" />
    <path d="M16 19h28M16 29h28M16 39h28" stroke="#0b6a96" strokeWidth="4" strokeLinecap="round" />
  </Ico>
);

const apps: { Icon: React.FC; dot?: boolean; active?: boolean }[] = [
  { Icon: WindowsLogo }, { Icon: TaskView }, { Icon: Explorer, dot: true }, { Icon: Chrome, active: true }, { Icon: Messages },
  { Icon: Spotify }, { Icon: Zoom }, { Icon: Discord }, { Icon: Slack, dot: true }, { Icon: Cmd }, { Icon: TaskMgr }, { Icon: VsCode },
  { Icon: Eclipse }, { Icon: PyCharm }, { Icon: IntelliJ, dot: true }, { Icon: Docker }, { Icon: Postman }, { Icon: Git, dot: true },
  { Icon: Photos, dot: true }, { Icon: Notepad, dot: true },
];

function Taskbar() {
  return (
    <div className="flex h-[120px] shrink-0 items-center bg-[linear-gradient(90deg,#21123a_0%,#2b174c_14%,#291842_30%,#241d36_42%,#22202e_52%,#1c2040_60%,#1f2030_68%,#202024_76%,#202020_100%)] pl-[420px] text-white">
      {apps.map(({ Icon, dot, active }, i) => (
        <div key={i} className="flex h-[120px] w-[110px] shrink-0 items-center justify-center">
          <div className={"relative flex h-[100px] w-[100px] items-center justify-center " + (active ? "rounded-[10px] border-2 border-[#453260] bg-[#3a2856]" : "")}>
            <Icon />
            {dot && <div className="absolute bottom-[3px] h-2 w-[15px] rounded-full bg-[#9a97a0]" />}
            {active && <div className="absolute bottom-[1px] h-2 w-10 rounded-full bg-[#5e5c5c]" />}
          </div>
        </div>
      ))}
      <svg viewBox="0 0 34 18" className="ml-[55px] h-[18px] w-[34px]"><path d="M1 17L17 1l16 16" fill="none" stroke="#fff" strokeWidth="2.200" /></svg>
      <svg viewBox="0 0 40 28" className="ml-[43px] h-[28px] w-10" fill="none" stroke="#fff" strokeWidth="2.600" strokeLinecap="round">
        <path d="M1.500 9.500a26 26 0 0137 0M7.500 15.500a17.500 17.500 0 0125 0M13.500 20.500a9.500 9.500 0 0113 0" /><circle cx="20" cy="25" r="2" fill="#fff" stroke="none" /><circle cx="20" cy="25" r="1.500" />
      </svg>
      <svg viewBox="0 0 38 28" className="ml-[20px] h-[28px] w-[38px]" fill="none" stroke="#fff" strokeWidth="2.500">
        <path d="M1.500 9.500v9h6l9 8V1.500l-9 8z" strokeLinejoin="round" /><path d="M24 7l13 14M37 7L24 21" />
      </svg>
      <svg viewBox="0 0 42 32" className="mb-[6px] ml-[21px] h-8 w-[42px]" fill="none" stroke="#fff" strokeWidth="2.600">
        <path d="M15 6.500h14a6 6 0 016 6v12a6 6 0 01-6 6H12" /><path d="M1 6h12v5a6 6 0 01-12 0z" fill="#fff" stroke="none" /><path d="M4 0v7M10 0v7M7 14v18M38.500 13v11" strokeWidth="3" /><path d="M13 26V17l6-6h9a3 3 0 013 3v9a3 3 0 01-3 3z" fill="#fff" stroke="none" />
      </svg>
      <div className="ml-auto mr-[28px] pb-[1px] text-right text-[29px] leading-[39px]">
        <div className="tracking-[-0.9px]">11:24 PM</div>
        <div className="tracking-[-0.5px]">5/14/2022</div>
      </div>
      <div className="mr-[49px] flex size-10 items-center justify-center rounded-full bg-[#5c5c5c] text-[25px] leading-none text-black">1</div>
    </div>
  );
}

export default function App() {
  return (
    <div className="relative flex h-[1800px] w-[3200px] flex-col overflow-hidden bg-white font-['Open_Sans',sans-serif]">
      <TabStrip />
      <Toolbar />
      <div className="flex h-[1502px] shrink-0 flex-col font-[Roboto,sans-serif]">
        <CloudHeader />
        <div className="flex h-[1370px] shrink-0">
          <Sidebar />
          <Main />
        </div>
      </div>
      <Taskbar />
      <div className="absolute bottom-[120px] left-0 z-20 flex h-[54px] w-[2000px] items-center whitespace-nowrap rounded-tr-[10px] bg-black pl-[13px] pt-[1px] text-[29px] tracking-[-0.22px] text-white">
        https://console.cloud.google.com/iam-admin/serviceaccounts/details/116532408256441466838/permissions?authuser=1&amp;project=cmpe172-341522
      </div>
    </div>
  );
}
